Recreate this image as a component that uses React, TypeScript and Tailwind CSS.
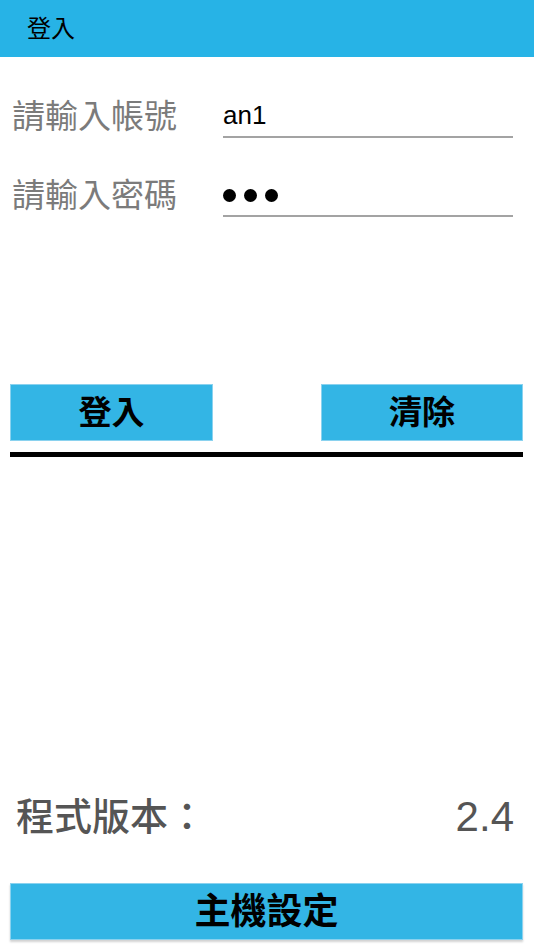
import React from 'react'

const cjk = "font-['Liberation_Sans','Noto_Sans_CJK_TC',sans-serif]"

function Field({ label, value, masked }: { label: string; value: string; masked?: boolean }) {
  return (
    <div className="flex items-center h-[44px]">
      <div className="w-[223px] pl-[12px] text-[33px] leading-none text-[#7b7b7b] whitespace-nowrap">{label}</div>
      <div className="w-[290px] h-[44px] flex items-center border-b-[2px] border-[#a3a3a3]">
        {masked ? (
          <span className="flex gap-[8px] pt-[2px]">
            {value.split('').map((_, i) => (
              <span key={i} className="w-[13px] h-[13px] rounded-full bg-black" />
            ))}
          </span>
        ) : (
          <span className="text-[26px] leading-none text-black">{value}</span>
        )}
      </div>
    </div>
  )
}

function BlueButton({ children, className }: { children: React.ReactNode; className?: string }) {
  return (
    <button
      className={`h-[57px] bg-[#33b5e5] border border-[#8ad2ef] flex items-center justify-center text-[33px] font-bold leading-none text-black ${className ?? ''}`}
    >
      {children}
    </button>
  )
}

export default function App() {
  return (
    <div className={`h-screen w-full flex flex-col bg-white ${cjk}`}>
      <div className="h-[57px] bg-[#27b3e6] flex items-center pl-[27px] text-[24px] text-black shrink-0">登入</div>

      <div className="mt-[37px] flex flex-col gap-[35px]">
        <Field label="請輸入帳號" value="an1" />
        <Field label="請輸入密碼" value="abc" masked />
      </div>

      <div className="mt-[167px] px-[10px] flex justify-between pr-[11px]">
        <BlueButton className="w-[203px]">登入</BlueButton>
        <BlueButton className="w-[202px]">清除</BlueButton>
      </div>
      <div className="mt-[11px] mx-[10px] mr-[11px] h-[5px] bg-black" />

      <div className="mt-auto flex items-center justify-between pl-[16px] pr-[20px] h-[48px] text-[38px] font-medium leading-none text-[#555555]">
        <span>程式版本：</span>
        <span className="text-[42px] font-normal">2.4</span>
      </div>

      <div className="mt-[42px] mb-[10px] px-[10px] pr-[11px]">
        <BlueButton className="w-full text-[36px] shadow-[0_2px_2px_rgba(0,0,0,0.18)]">主機設定</BlueButton>
      </div>
    </div>
  )
}
